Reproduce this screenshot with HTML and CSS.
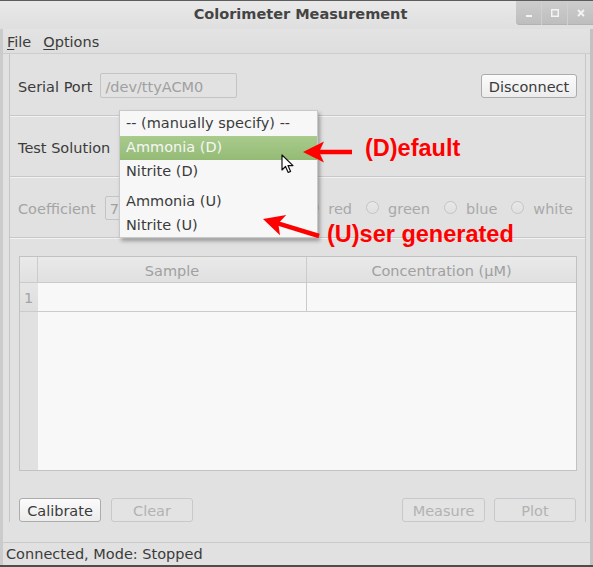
FILE: index.html
```html
<!DOCTYPE html>
<html>
<head>
<meta charset="utf-8">
<link rel="stylesheet" href="styles.css">
</head>
<body>
<div class="window">
  <div class="titlebar">
    <div class="title">Colorimeter Measurement</div>
    <div class="wm">
      <div class="wm-btn"><svg width="8" height="8" viewBox="0 0 8 8"><rect x="1" y="6" width="6" height="2" fill="#f4f4f4"/></svg></div>
      <div class="wm-btn"><svg width="8" height="8" viewBox="0 0 8 8"><rect x="0.75" y="0.75" width="6.5" height="6.5" fill="none" stroke="#f4f4f4" stroke-width="1.5"/><rect x="2.5" y="2.5" width="3" height="3" fill="#c8c8c8"/></svg></div>
      <div class="wm-btn"><svg width="8" height="8" viewBox="0 0 8 8"><path d="M1 1 L7 7 M7 1 L1 7" stroke="#f4f4f4" stroke-width="1.8"/></svg></div>
    </div>
  </div>
  <div class="body">
    <div class="menubar">
      <span class="menu"><u>F</u>ile</span>
      <span class="menu"><u>O</u>ptions</span>
    </div>
    <div class="central">
      <div class="row">
        <span class="label">Serial Port</span>
        <div class="field port"><span class="txt">/dev/ttyACM0</span></div>
        <div class="spacer"></div>
        <div class="btn disconnect"><span class="txt">Disconnect</span></div>
      </div>
      <div class="sep"></div>
      <div class="row">
        <span class="label">Test Solution</span>
        <div class="combo"></div>
      </div>
      <div class="sep"></div>
      <div class="row">
        <span class="label disabled">Coefficient</span>
        <div class="field coef"><span class="txt">7</span></div>
        <div class="spacer"></div>
        <div class="radios">
          <span class="radio"><i></i><span class="txt">red</span></span>
          <span class="radio"><i></i><span class="txt">green</span></span>
          <span class="radio"><i></i><span class="txt">blue</span></span>
          <span class="radio"><i></i><span class="txt">white</span></span>
        </div>
      </div>
      <div class="sep"></div>
      <div class="table">
        <div class="hcell corner"></div>
        <div class="hcell"><span class="txt">Sample</span></div>
        <div class="hcell"><span class="txt">Concentration (µM)</span></div>
        <div class="vhead"><span class="txt">1</span></div>
        <div class="cell"></div>
        <div class="cell last"></div>
        <div class="vempty"></div>
        <div class="empty"></div>
      </div>
      <div class="buttons">
        <div class="btn"><span class="txt">Calibrate</span></div>
        <div class="btn off"><span class="txt">Clear</span></div>
        <div class="spacer"></div>
        <div class="btn off measure"><span class="txt">Measure</span></div>
        <div class="btn off"><span class="txt">Plot</span></div>
      </div>
    </div>
    <div class="status">Connected, Mode: Stopped</div>
  </div>

  <div class="popup">
    <div class="item">-- (manually specify) --</div>
    <div class="item sel">Ammonia (D)</div>
    <div class="item">Nitrite (D)</div>
    <div class="psep"></div>
    <div class="item">Ammonia (U)</div>
    <div class="item">Nitrite (U)</div>
  </div>

  <svg class="cursor" width="14" height="20" viewBox="0 0 14 20">
    <path d="M1 1 L1 16 L4.5 12.5 L7.2 18.5 L9.6 17.4 L7 11.6 L12 11.6 Z" fill="#ffffff" stroke="#111" stroke-width="1.2" stroke-linejoin="round"/>
  </svg>

  <svg class="annot" width="593" height="567" viewBox="0 0 593 567">
    <line x1="352" y1="152" x2="318" y2="152" stroke="#ff0000" stroke-width="4.5"/>
    <polygon points="303,152 324,141.5 319,152 324,162.5" fill="#ff0000"/>
    <line x1="319" y1="236" x2="277" y2="223.2" stroke="#ff0000" stroke-width="4.5"/>
    <polygon points="263,219 286.2,215 278.3,223.6 280,235.2" fill="#ff0000"/>
  </svg>
  <div class="note note-d">(D)efault</div>
  <div class="note note-u">(U)ser generated</div>
</div>
</body>
</html>
```

FILE: styles.css
```css
* { box-sizing: border-box; }
html, body { margin: 0; padding: 0; }
body {
  width: 593px;
  height: 567px;
  overflow: hidden;
  background: #e0e0e0;
  font-family: "DejaVu Sans", sans-serif;
  font-size: 14.5px;
  color: #3b3b3b;
}
.txt { position: relative; top: 1px; }
.window {
  position: relative;
  width: 593px;
  height: 567px;
  display: flex;
  flex-direction: column;
  background: #e1e1e1;
  border-top: 1px solid #5c5c5c;
  border-bottom: 2px solid #4c4c4c;
}
.titlebar {
  height: 29px;
  display: flex;
  background: linear-gradient(#e9e9e9, #dfdfdf);
}
.title {
  flex: 1;
  text-align: center;
  padding-left: 85px;
  font-weight: bold;
  font-size: 14.5px;
  color: #444444;
  line-height: 27px;
  white-space: nowrap;
}
.wm {
  display: flex;
  width: 77px;
  height: 24px;
  background: linear-gradient(#cdcdcd, #bdbdbd);
  border-radius: 0 0 0 4px;
  box-shadow: inset 0 -1px 0 #b2b2b2;
}
.wm-btn {
  flex: 1;
  display: flex;
  align-items: center;
  justify-content: center;
  border-left: 1px solid #d0d0d0;
}
.wm-btn:first-child { border-left: none; }
.body {
  flex: 1;
  display: flex;
  flex-direction: column;
  border-left: 3px solid #cbcbcb;
  border-right: 3px solid #c2c2c2;
}
.menubar {
  height: 25px;
  display: flex;
  gap: 12px;
  align-items: center;
  padding-left: 4px;
  padding-top: 2px;
  border-bottom: 1px solid #cdcdcd;
  background: linear-gradient(#e3e3e3, #dedede);
}
.menu u { text-decoration-thickness: 1px; text-underline-offset: 2px; }
.central {
  flex: 1;
  margin: 0 4px 0 6px;
  border-left: 1px solid #c6c6c6;
  border-right: 1px solid #c6c6c6;
  padding: 19px 8px 0 8px;
  display: flex;
  flex-direction: column;
}
.row {
  height: 25px;
  display: flex;
  align-items: center;
}
.spacer { flex: 1; }
.label { white-space: nowrap; position: relative; top: 1px; }
.disabled { color: #a4a4a4; }
.field {
  height: 25px;
  border: 1px solid #c4c4c4;
  border-radius: 2px;
  background: #e2e2e2;
  color: #a0a0a0;
  display: flex;
  align-items: center;
  padding-left: 4px;
}
.port { width: 137px; margin-left: 8px; }
.coef { width: 60px; margin-left: 9px; height: 24px; }
.combo { width: 199px; margin-left: 8px; height: 25px; }
.btn {
  height: 24px;
  width: 82px;
  border: 1px solid #acacac;
  border-radius: 3px;
  background: linear-gradient(#fbfbfb, #ececec);
  display: flex;
  align-items: center;
  justify-content: center;
  color: #3b3b3b;
}
.btn.disconnect { width: 96px; }
.btn.off {
  border-color: #c8c8c8;
  background: #e3e3e3;
  color: #b2b2b2;
}
.sep {
  height: 2px;
  margin: 17px -8px;
  border-top: 1px solid #c8c8c8;
  background: #f2f2f2;
}
.radios {
  display: flex;
  gap: 14px;
  margin-right: 4px;
  color: #a9a9a9;
}
.radio { display: flex; align-items: center; }
.radio i {
  width: 13px;
  height: 13px;
  border-radius: 50%;
  border: 1px solid #c4c4c4;
  background: linear-gradient(#e8e8e8, #e0e0e0);
  margin-right: 9px;
}
.table {
  height: 215px;
  margin-left: 1px;
  border: 1px solid #c2c2c2;
  display: grid;
  grid-template-columns: 18px 269px 1fr;
  grid-template-rows: 26px 29px 1fr;
  background: #f8f8f8;
}
.hcell {
  background: linear-gradient(#eaeaea, #e0e0e0);
  border-right: 1px solid #cbcbcb;
  border-bottom: 1px solid #cbcbcb;
  color: #a0a0a0;
  display: flex;
  align-items: center;
  justify-content: center;
  white-space: nowrap;
}
.hcell:nth-child(3) { border-right: none; }
.vhead {
  background: linear-gradient(#e6e6e6, #dedede);
  border-bottom: 1px solid #cbcbcb;
  color: #a3a3a3;
  padding-left: 4px;
  display: flex;
  align-items: center;
}
.cell {
  border-right: 1px solid #cbcbcb;
  border-bottom: 1px solid #cbcbcb;
  background: #f8f8f8;
}
.cell.last { border-right: none; }
.vempty { background: #e1e1e1; }
.empty { grid-column: 2 / 4; background: #f8f8f8; }
.buttons {
  margin-top: 27px;
  display: flex;
  padding: 0 1px;
  gap: 10px;
}
.buttons .measure { width: 83px; margin-right: -1px; }
.status {
  margin-top: 20px;
  height: 23px;
  border-top: 1px solid #cacaca;
  padding-left: 3px;
  display: flex;
  align-items: center;
  color: #3b3b3b;
  white-space: nowrap;
}
.popup {
  position: absolute;
  left: 119px;
  top: 109px;
  width: 199px;
  height: 128px;
  background: #f7f7f7;
  border: 1px solid #c8c8c8;
  padding-top: 1px;
  box-shadow: 2px 3px 4px rgba(0, 0, 0, 0.32);
}
.item {
  height: 24px;
  padding-left: 6px;
  padding-bottom: 3px;
  display: flex;
  align-items: center;
  color: #3b3b3b;
  white-space: nowrap;
}
.item.sel {
  background: linear-gradient(#a9cb8c, #94bb76);
  color: #f6f6f6;
}
.psep { height: 6px; }
.cursor {
  position: absolute;
  left: 281px;
  top: 153px;
}
.annot {
  position: absolute;
  left: 0;
  top: -1px;
}
.note {
  position: absolute;
  font-family: "Liberation Sans", Arial, sans-serif;
  font-weight: bold;
  font-size: 23.5px;
  line-height: 24px;
  color: #ff0000;
  white-space: nowrap;
}
.note-d { left: 365px; top: 135px; }
.note-u { left: 327px; top: 221px; }
```
